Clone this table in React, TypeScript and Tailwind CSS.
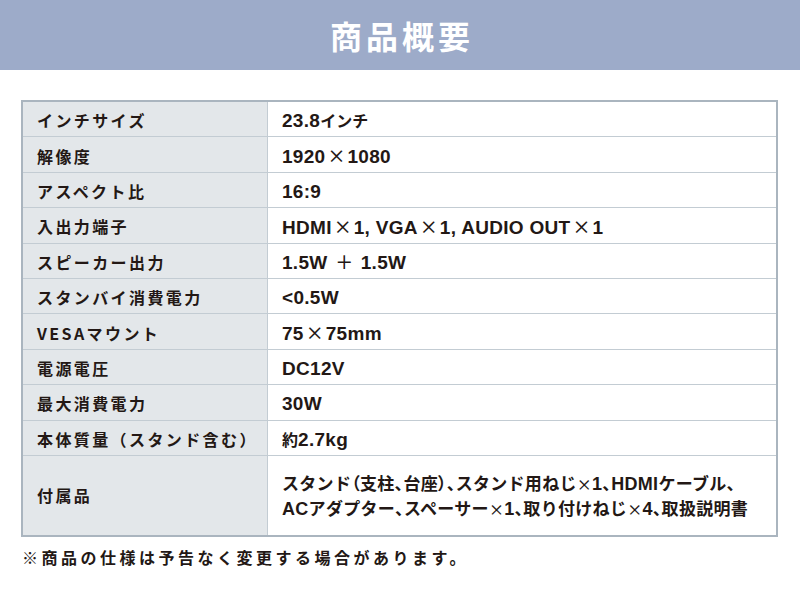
import React from "react";

const rows: [string, string][] = [
  ["インチサイズ", "23.8インチ"],
  ["解像度", "1920×1080"],
  ["アスペクト比", "16:9"],
  ["入出力端子", "HDMI×1, VGA×1, AUDIO OUT×1"],
  ["スピーカー出力", "1.5W ＋ 1.5W"],
  ["スタンバイ消費電力", "<0.5W"],
  ["VESAマウント", "75×75mm"],
  ["電源電圧", "DC12V"],
  ["最大消費電力", "30W"],
  ["本体質量（スタンド含む）", "約2.7kg"],
];

type Kind = "latin" | "times" | "punct" | "jp";

function splitRuns(text: string) {
  const runs: { kind: Kind; s: string }[] = [];
  for (const ch of text) {
    const kind: Kind =
      ch === "×" || ch === "＋"
        ? "times"
        : ch.charCodeAt(0) < 128
        ? "latin"
        : "、（）".includes(ch)
        ? "punct"
        : "jp";
    const last = runs[runs.length - 1];
    if (last && last.kind === kind) last.s += ch;
    else runs.push({ kind, s: ch });
  }
  return runs;
}

function Value({ text }: { text: string }) {
  return (
    <>
      {splitRuns(text).map((r, i) =>
        r.kind === "latin" ? (
          <span key={i} className="font-['Liberation_Sans',sans-serif] text-[19px] tracking-[0.3px] whitespace-pre">
            {r.s}
          </span>
        ) : r.kind === "times" ? (
          <span key={i} className="font-['Noto_Sans_CJK_JP',sans-serif] text-[18px] font-medium mx-[2px] whitespace-pre">
            {r.s}
          </span>
        ) : (
          <span key={i} className="font-['Noto_Sans_CJK_JP',sans-serif] text-[16px]">
            {r.s}
          </span>
        )
      )}
    </>
  );
}

function Small({ text }: { text: string }) {
  return (
    <>
      {splitRuns(text).map((r, i) =>
        r.kind === "latin" ? (
          <span key={i} className="font-['Liberation_Sans',sans-serif] text-[18px] whitespace-pre">
            {r.s}
          </span>
        ) : r.kind === "times" ? (
          <span key={i} className="font-['Noto_Sans_CJK_JP',sans-serif] text-[15px] font-medium">
            {r.s}
          </span>
        ) : r.kind === "punct" ? (
          <span key={i} className="font-['Noto_Sans_CJK_JP',sans-serif] text-[17px] [font-feature-settings:'palt']">
            {r.s}
          </span>
        ) : (
          <span key={i} className="font-['Noto_Sans_CJK_JP',sans-serif] text-[17px]">
            {r.s}
          </span>
        )
      )}
    </>
  );
}

export default function App() {
  return (
    <div className="w-[800px] h-[600px] bg-white text-[#231815] overflow-hidden">
      <div className="h-[70px] bg-[#9dabc9] flex items-center justify-center">
        <span className="text-white font-bold text-[32px] tracking-[4px] pl-[4px] leading-none font-['Noto_Sans_CJK_JP',sans-serif]">
          商品概要
        </span>
      </div>
      <div className="ml-[21px] mt-[30px] w-[757px] border-2 border-[#aab5bf]">
        {rows.map(([k, v], i) => (
          <div key={i} className="flex h-[35.4px] border-b border-[#c3ccd3]">
            <div className="w-[245px] bg-[#e3e7ea] border-r border-[#c3ccd3] flex items-center pl-[14px] pt-[2px] text-[16px] font-bold tracking-[2.4px] font-['Noto_Sans_CJK_JP',sans-serif]">
              {k}
            </div>
            <div className="flex-1 flex items-center pl-[14px] pt-[3px] font-bold leading-none">
              <div>
                <Value text={v} />
              </div>
            </div>
          </div>
        ))}
        <div className="flex h-[79px]">
          <div className="w-[245px] bg-[#e3e7ea] border-r border-[#c3ccd3] flex items-center pl-[14px] text-[16px] font-bold tracking-[2.4px] font-['Noto_Sans_CJK_JP',sans-serif]">
            付属品
          </div>
          <div className="flex-1 flex flex-col justify-center pl-[14px] pt-[2px] font-bold leading-[23px] tracking-[0.3px]">
            <div>
              <Small text="スタンド（支柱、台座）、スタンド用ねじ×1、HDMIケーブル、" />
            </div>
            <div>
              <Small text="ACアダプター、スペーサー×1、取り付けねじ×4、取扱説明書" />
            </div>
          </div>
        </div>
      </div>
      <div className="ml-[22px] mt-[8px] text-[16px] font-bold tracking-[3.5px] font-['Noto_Sans_CJK_JP',sans-serif]">
        ※商品の仕様は予告なく変更する場合があります。
      </div>
    </div>
  );
}
